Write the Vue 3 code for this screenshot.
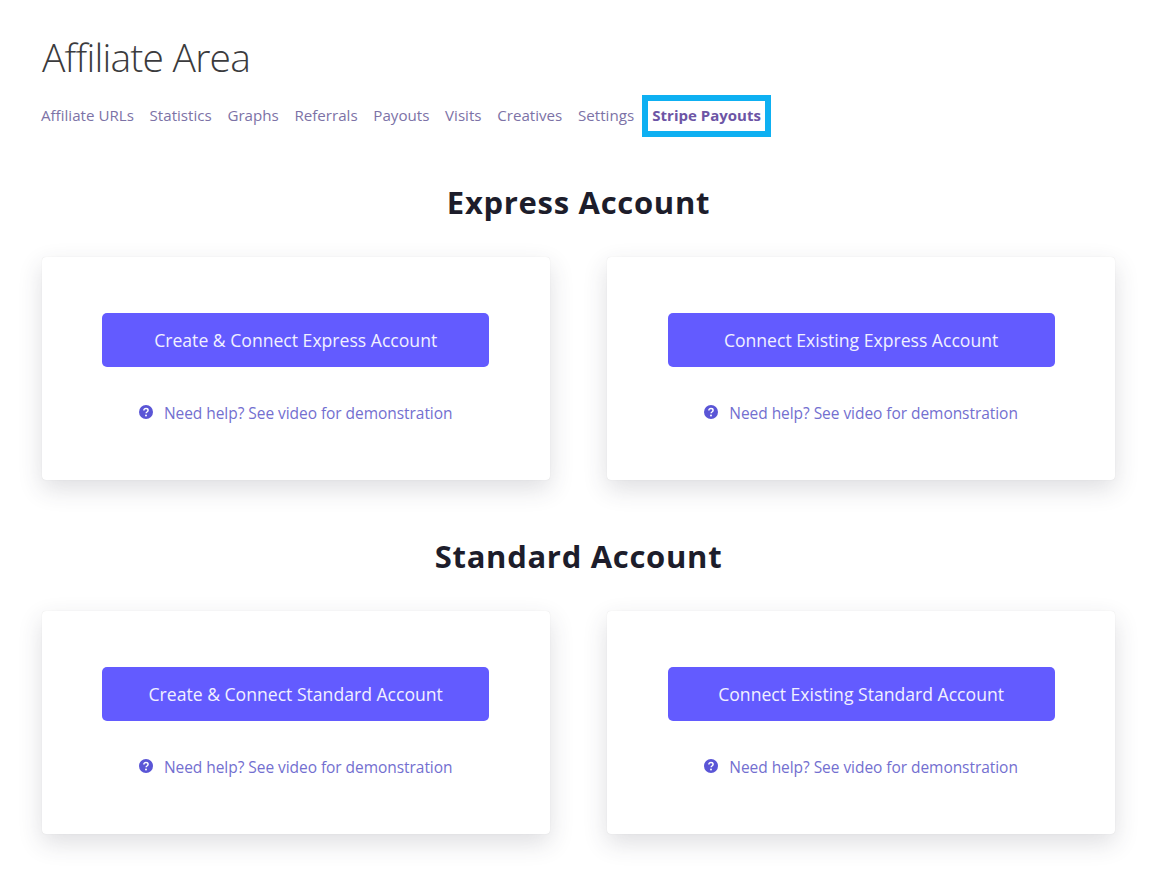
<script setup>
const navItems = ['Affiliate URLs', 'Statistics', 'Graphs', 'Referrals', 'Payouts', 'Visits', 'Creatives', 'Settings']

const sections = [
  { title: 'Express Account', actions: ['Create & Connect Express Account', 'Connect Existing Express Account'] },
  { title: 'Standard Account', actions: ['Create & Connect Standard Account', 'Connect Existing Standard Account'] }
]
</script>

<template>
  <div class="page">
    <h1 class="title">Affiliate Area</h1>

    <nav class="nav">
      <a v-for="item in navItems" :key="item" class="nav-link">{{ item }}</a>
      <a class="nav-link active">Stripe Payouts</a>
    </nav>

    <section v-for="section in sections" :key="section.title" class="section">
      <h2 class="heading">{{ section.title }}</h2>
      <div class="cards">
        <div v-for="action in section.actions" :key="action" class="card">
          <button class="btn">{{ action }}</button>
          <a class="help">
            <svg class="help-icon" viewBox="0 0 16 16" width="14" height="14">
              <circle cx="8" cy="8" r="8" fill="#5a55d6" />
              <path d="M5.6 6.2c0-1.4 1-2.2 2.4-2.2s2.400.8 2.400 2c0 1-.6 1.500-1.300 2-.6.400-.9.700-.9 1.300" fill="none" stroke="#fff" stroke-width="1.700" />
              <circle cx="8" cy="12" r="1.100" fill="#fff" />
            </svg>
            <span>Need help? See video for demonstration</span>
          </a>
        </div>
      </div>
    </section>
  </div>
</template>

<style>
body {
  background: #fff;
}
</style>

<style scoped>
.page {
  box-sizing: border-box;
  width: 1157px;
  height: 881px;
  overflow: hidden;
  padding: 33px 42px 0 42px;
  font-family: "Open Sans", "Noto Sans", sans-serif;
}

.title {
  margin: 0;
  font-size: 39px;
  line-height: 48px;
  font-weight: 300;
  letter-spacing: -0.8px;
  color: #3b3b3d;
}

.nav {
  display: flex;
  align-items: center;
  margin: 14px 0 0 -1px;
  height: 42px;
}

.nav-link {
  margin: 0 15.7px 2px 0;
  font-size: 15.13px;
  color: #7c72a6;
  white-space: nowrap;
}

.nav-link.active {
  box-sizing: border-box;
  width: 129px;
  height: 42px;
  margin: 0 0 0 -7.7px;
  border: 6px solid #0eb0f2;
  font-weight: 700;
  line-height: 29px;
  text-align: center;
  font-size: 15px;
  color: #6d55a5;
}

.section {
  margin-top: 43px;
}

.section + .section {
  margin-top: 54px;
}

.heading {
  margin: 0 0 33px;
  font-size: 31px;
  line-height: 44px;
  font-weight: 700;
  letter-spacing: 0.7px;
  text-align: center;
  color: #1d1d2b;
}

.cards {
  display: grid;
  grid-template-columns: 508px 508px;
  gap: 57.4px;
}

.card {
  box-sizing: border-box;
  height: 223px;
  padding: 56px 60.8px 0 60.2px;
  border-radius: 4px;
  background: #fff;
  box-shadow: 0 0 1px rgba(0, 0, 0, 0.14), 0 9px 24px rgba(50, 50, 70, 0.16);
}

.btn {
  display: block;
  width: 100%;
  height: 54px;
  padding: 0;
  border: 0;
  border-radius: 5px;
  background: #635bff;
  color: #f1f0ff;
  font-family: inherit;
  font-size: 17.6px;
}

.help {
  display: flex;
  align-items: center;
  justify-content: center;
  gap: 11px;
  margin-top: 34px;
  font-size: 15.5px;
  line-height: 24px;
  letter-spacing: -0.05px;
  color: #736fd0;
}

.help-icon {
  flex: none;
  margin-top: -2px;
}
</style>
